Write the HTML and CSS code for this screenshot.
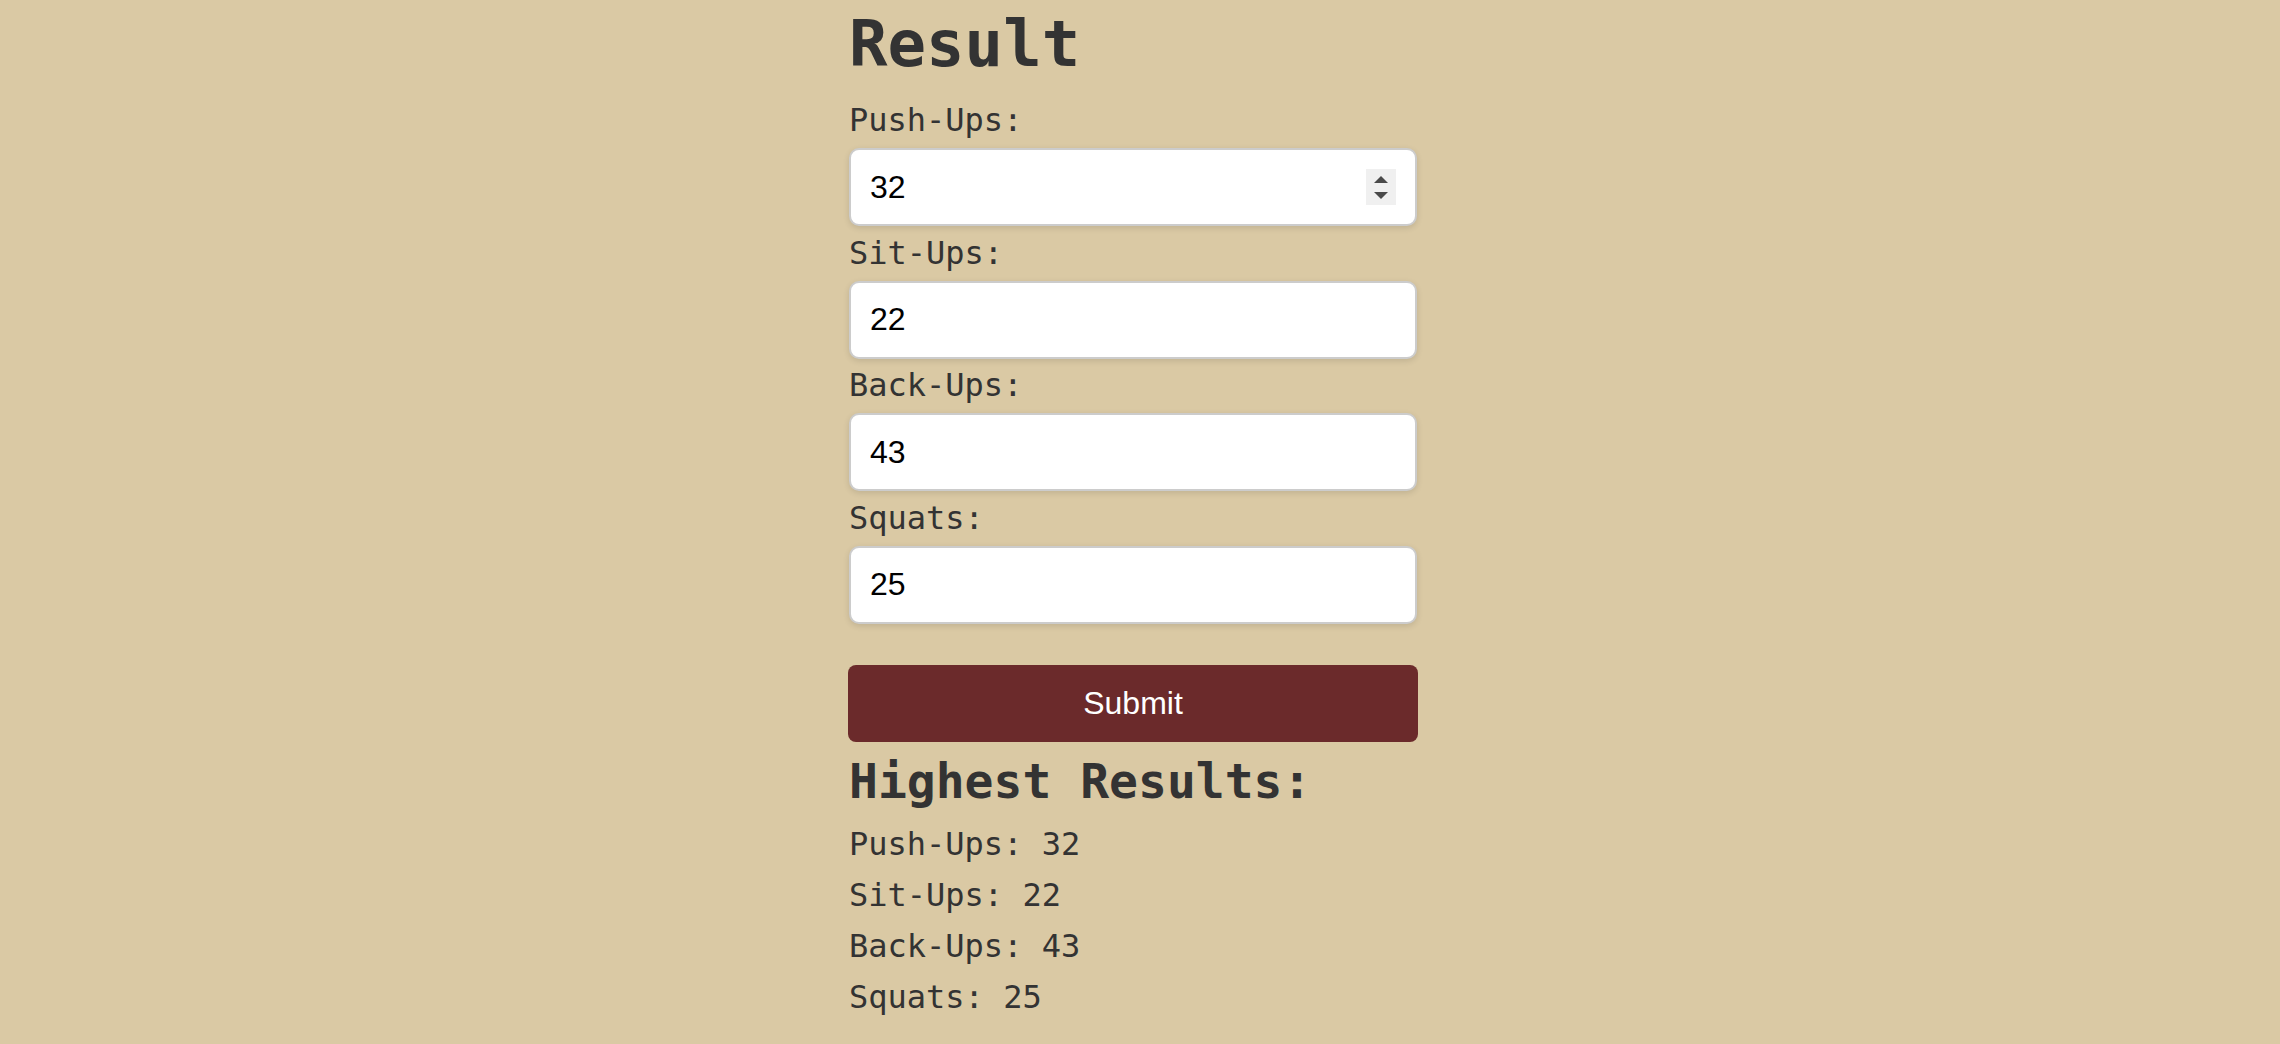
FILE: index.html
```html
<!DOCTYPE html>
<html lang="en">
<head>
<meta charset="utf-8">
<title>Result</title>
<link rel="stylesheet" href="styles.css">
</head>
<body>
<main class="page">
  <h1 class="title">Result</h1>
  <form class="form">
    <label class="label" for="push">Push-Ups:</label>
    <div class="input-wrap">
      <input class="input" id="push" type="text" value="32">
      <span class="spinner"><span class="tri-up"></span><span class="tri-down"></span></span>
    </div>
    <label class="label" for="sit">Sit-Ups:</label>
    <input class="input" id="sit" type="text" value="22">
    <label class="label" for="back">Back-Ups:</label>
    <input class="input" id="back" type="text" value="43">
    <label class="label" for="squat">Squats:</label>
    <input class="input" id="squat" type="text" value="25">
    <button class="submit" type="button">Submit</button>
  </form>
  <h2 class="subtitle">Highest Results:</h2>
  <div class="results">
    <p class="result">Push-Ups: 32</p>
    <p class="result">Sit-Ups: 22</p>
    <p class="result">Back-Ups: 43</p>
    <p class="result">Squats: 25</p>
  </div>
</main>
</body>
</html>
```
FILE: styles.css
```css
html, body {
  margin: 0;
  padding: 0;
}
body {
  background: #dac9a4;
  display: flex;
  justify-content: center;
  padding-right: 14px;
  min-height: 1044px;
  box-sizing: border-box;
  font-family: "DejaVu Sans Mono", "Liberation Mono", monospace;
  color: #333333;
}
.page {
  width: 570px;
  padding-top: 7px;
  display: flex;
  flex-direction: column;
}
.title {
  margin: 0;
  font-size: 64px;
  line-height: 75px;
  font-weight: bold;
  padding-left: 1px;
}
.form {
  margin-top: 20px;
  display: flex;
  flex-direction: column;
}
.label {
  font-size: 32px;
  line-height: 37px;
  margin: 8.5px 0 9px 1px;
}
.form > .label:first-child {
  margin-top: 0;
}
.input-wrap {
  position: relative;
  display: flex;
  flex-direction: column;
}
.input {
  box-sizing: border-box;
  height: 78px;
  margin: 0 1px;
  padding: 0 19px;
  border: 2px solid #cccccc;
  border-radius: 10px;
  background: #ffffff;
  box-shadow: 0 2px 6px rgba(0, 0, 0, 0.12);
  font-family: "Liberation Sans", Arial, sans-serif;
  font-size: 32px;
  color: #000000;
  outline: none;
}
.spinner {
  position: absolute;
  left: 518px;
  top: 21px;
  width: 30px;
  height: 36px;
  background: #f0f0f0;
  display: flex;
  flex-direction: column;
  align-items: center;
  justify-content: center;
  gap: 9px;
}
.tri-up, .tri-down {
  width: 0;
  height: 0;
  border-left: 7.5px solid transparent;
  border-right: 7.5px solid transparent;
}
.tri-up {
  border-bottom: 7px solid #4a4a4a;
}
.tri-down {
  border-top: 7px solid #4a4a4a;
}
.submit {
  margin-top: 41.5px;
  height: 77px;
  border: none;
  border-radius: 8px;
  background: #6b2a2b;
  color: #ffffff;
  font-family: "Liberation Sans", Arial, sans-serif;
  font-size: 32px;
  padding: 0;
}
.subtitle {
  margin: 11px 0 0 1px;
  font-size: 48px;
  line-height: 56px;
  font-weight: bold;
}
.results {
  margin-top: 9.5px;
}
.result {
  margin: 0 0 0 1px;
  font-size: 32px;
  line-height: 51px;
}
```
